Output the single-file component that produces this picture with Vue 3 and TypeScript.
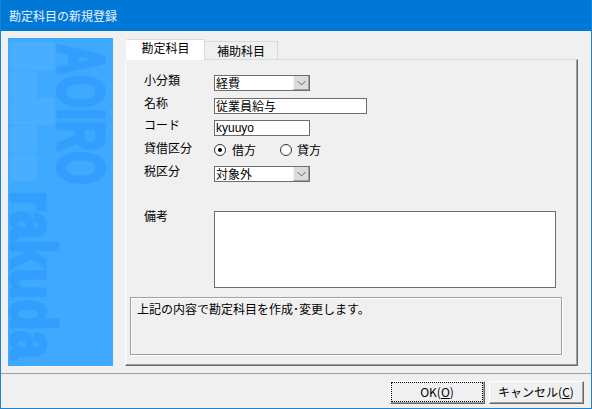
<script setup lang="ts">
import { ref } from "vue";

// バナーの薄い四角（透かし）
interface Block {
  top: number;
  width: number;
  height: number;
}

const blocks: Block[] = [
  { top: 4, width: 45, height: 28 },
  { top: 33, width: 27, height: 27 },
  { top: 60, width: 45, height: 27 },
  { top: 88, width: 27, height: 27 },
  { top: 116, width: 27, height: 27 },
];

const taxKind = ref<"debit" | "credit">("debit");
</script>

<template>
  <div class="window">
    <div class="titlebar">勘定科目の新規登録</div>

    <div class="main">
      <div class="banner">
        <span
          v-for="(b, i) in blocks"
          :key="i"
          class="block"
          :style="{ top: b.top + 'px', width: b.width + 'px', height: b.height + 'px' }"
        ></span>
        <span class="mark mark-aoiro">AOIRO</span>
        <span class="mark mark-rakuda">rakuda</span>
      </div>

      <div class="sheet">
        <div class="tabs">
          <div class="tab active">勘定科目</div>
          <div class="tab">補助科目</div>
        </div>

        <div class="panel">
          <div class="form">
            <div class="row">
              <span class="label">小分類</span>
              <div class="field combo">
                <span class="value">経費</span>
                <span class="drop">
                  <svg width="9" height="6" viewBox="0 0 9 6">
                    <path d="M0.5 1 L4.5 5 L8.5 1" fill="none" stroke="#666" stroke-width="1" />
                  </svg>
                </span>
              </div>
            </div>
            <div class="row">
              <span class="label">名称</span>
              <div class="field wide"><span class="value">従業員給与</span></div>
            </div>
            <div class="row tight">
              <span class="label">コード</span>
              <div class="field combo"><span class="value latin">kyuuyo</span></div>
            </div>
            <div class="row">
              <span class="label">貸借区分</span>
              <div class="radios">
                <span class="radio" :class="{ on: taxKind === 'debit' }"></span>
                <span class="radio-text first">借方</span>
                <span class="radio" :class="{ on: taxKind === 'credit' }"></span>
                <span class="radio-text second">貸方</span>
              </div>
            </div>
            <div class="row">
              <span class="label">税区分</span>
              <div class="field combo">
                <span class="value">対象外</span>
                <span class="drop">
                  <svg width="9" height="6" viewBox="0 0 9 6">
                    <path d="M0.5 1 L4.5 5 L8.5 1" fill="none" stroke="#666" stroke-width="1" />
                  </svg>
                </span>
              </div>
            </div>
            <div class="row memo-row">
              <span class="label">備考</span>
              <div class="field memo"></div>
            </div>
          </div>

          <div class="info">上記の内容で勘定科目を作成･変更します。</div>
        </div>
      </div>
    </div>

    <div class="footer">
      <button class="btn focused" type="button"><span class="focus-ring">OK(<u>O</u>)</span></button>
      <button class="btn" type="button"><span class="focus-ring plain">キャンセル(<u>C</u>)</span></button>
    </div>
  </div>
</template>

<style>
html,
body {
  margin: 0;
  background: #f0f0f0;
}
</style>

<style scoped>
.window {
  width: 592px;
  height: 409px;
  box-sizing: border-box;
  border: 1px solid #1883d7;
  border-top: 0;
  background: #f0f0f0;
  display: flex;
  flex-direction: column;
  font-family: "Noto Sans CJK JP", "Liberation Sans", sans-serif;
  font-size: 12px;
  color: #000;
  overflow: hidden;
}
.titlebar {
  height: 31px;
  flex: none;
  margin: 0 -1px;
  padding-left: 9px;
  background: #0078d7;
  color: #e6f2fb;
  line-height: 31px;
}
.main {
  flex: 1;
  display: flex;
  gap: 12px;
  padding: 7px 13px 0 7px;
  min-height: 0;
}
.banner {
  position: relative;
  width: 105px;
  height: 328px;
  flex: none;
  background: #3fa9ff;
}
.block {
  position: absolute;
  left: 2px;
  background: #49aeff;
  border-radius: 3px;
}
.mark {
  position: absolute;
  transform-origin: 0 0;
  font-family: "Liberation Sans", sans-serif;
  font-weight: 700;
  line-height: 0.72;
  white-space: nowrap;
  color: #329fff;
  -webkit-text-stroke: 3px #329fff;
}
.mark-aoiro {
  left: 96px;
  top: 6px;
  font-size: 66px;
  transform: rotate(90deg) scaleX(0.65);
}
.mark-rakuda {
  left: 48px;
  top: 153px;
  font-size: 64px;
  transform: rotate(90deg) scaleX(0.8);
}
.sheet {
  width: 453px;
  height: 328px;
  flex: none;
  display: flex;
  flex-direction: column;
}
.tabs {
  height: 21px;
  flex: none;
  display: flex;
  align-items: flex-end;
  padding-left: 1px;
}
.tab {
  position: relative;
  box-sizing: border-box;
  width: 73px;
  height: 18px;
  border: 1px solid #d9d9d9;
  border-left: 0;
  border-bottom: 0;
  text-align: center;
  line-height: 17px;
}
.tab.active {
  width: 79px;
  height: 21px;
  margin-bottom: -1px;
  background: #fff;
  border-left: 1px solid #fff;
  line-height: 15px;
  z-index: 1;
}
.panel {
  flex: 1;
  box-sizing: border-box;
  border-top: 1px solid #d9d9d9;
  border-left: 1px solid #fff;
  border-right: 1px solid #696969;
  border-bottom: 1px solid #696969;
  box-shadow: inset -1px -1px 0 #a0a0a0;
  padding: 15px 0 0 4px;
}
.form {
  padding-left: 14px;
}
.row {
  display: flex;
  align-items: flex-start;
  height: 16px;
  margin-bottom: 7px;
}
.row.tight {
  margin-top: -1px;
}
.label {
  width: 70px;
  flex: none;
  line-height: 12px;
  margin-top: -1px;
}
.field {
  box-sizing: border-box;
  height: 16px;
  border: 1px solid #6e6e6e;
  background: #fff;
  display: flex;
  align-items: stretch;
  justify-content: space-between;
}
.combo {
  width: 96px;
}
.wide {
  width: 153px;
}
.value {
  padding-left: 1px;
  line-height: 14px;
}
.latin {
  font-family: "Liberation Sans", sans-serif;
}
.drop {
  width: 16px;
  box-sizing: border-box;
  background: #dcdcdc;
  border-left: 1px solid #f5f5f5;
  border-right: 1px solid #a0a0a0;
  border-bottom: 1px solid #a0a0a0;
  display: flex;
  align-items: center;
  justify-content: center;
}
.radios {
  display: flex;
  align-items: center;
  height: 16px;
  margin-top: -1px;
}
.radio {
  box-sizing: border-box;
  width: 12px;
  height: 12px;
  border: 1px solid #333;
  border-radius: 50%;
  background: #fff;
  display: flex;
  align-items: center;
  justify-content: center;
}
.radio.on::after {
  content: "";
  width: 4px;
  height: 4px;
  border-radius: 50%;
  background: #000;
}
.radio-text {
  margin-left: 6px;
  line-height: 12px;
  margin-top: -1px;
}
.radio-text.first {
  margin-right: 24px;
}
.radio-text.second {
  margin-left: 5px;
}
.memo-row {
  height: 77px;
  margin-top: 29px;
  margin-bottom: 0;
}
.memo {
  width: 342px;
  height: 77px;
}
.info {
  box-sizing: border-box;
  width: 432px;
  height: 58px;
  margin-top: 9px;
  padding: 2px 0 0 6px;
  border: 1px solid #a0a0a0;
  box-shadow: inset 1px 1px 0 #fff, 1px 1px 0 #fff;
  line-height: 17px;
}
.footer {
  flex: none;
  height: 35px;
  box-sizing: border-box;
  border-top: 1px solid #a0a0a0;
  padding: 7px 7px 0 0;
  display: flex;
  justify-content: flex-end;
  gap: 4px;
}
.btn {
  box-sizing: border-box;
  width: 95px;
  height: 23px;
  padding: 0;
  background: #f0f0f0;
  border: 1px solid;
  border-color: #fff #696969 #696969 #fff;
  box-shadow: inset -1px -1px 0 #a0a0a0;
  font: inherit;
  color: #000;
  display: flex;
}
.focus-ring {
  flex: 1;
  box-sizing: border-box;
  border: 1px dotted #000;
  margin: 0 1px 1px 0;
  line-height: 18px;
  text-align: center;
}
.focus-ring.plain {
  border-color: transparent;
}
</style>
